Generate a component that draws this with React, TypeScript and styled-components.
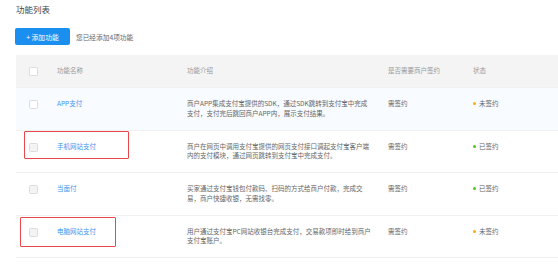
import styled, { createGlobalStyle } from "styled-components";

const GlobalStyle = createGlobalStyle`
  html, body {
    margin: 0;
    padding: 0;
    background: #ffffff;
  }
  body {
    font-family: "Noto Sans CJK SC", "Noto Sans", "Liberation Sans", sans-serif;
    -webkit-font-smoothing: antialiased;
  }
`;

const Page = styled.div`
  position: relative;
  width: 558px;
  height: 264px;
  overflow: hidden;
  padding-left: 16px;
  box-sizing: border-box;
`;

const Title = styled.div`
  font-size: 8.5px;
  line-height: 12px;
  color: #444;
  padding-top: 3px;
`;

const Toolbar = styled.div`
  display: flex;
  align-items: center;
  gap: 6px;
  margin-top: 13px;
  margin-left: -1px;
`;

const AddButton = styled.button`
  width: 55px;
  height: 17px;
  border: none;
  border-radius: 2px;
  background: #1a8ff0;
  color: #fff;
  font-family: inherit;
  font-size: 6.8px;
  padding: 0;
  cursor: pointer;
`;

const Hint = styled.span`
  font-size: 6.7px;
  color: #666;
`;

const Table = styled.div`
  margin-top: 10px;
  width: 560px;
`;

const Row = styled.div<{ $head?: boolean; $hover?: boolean }>`
  display: grid;
  grid-template-columns: 28px 130px 201px 85px 1fr;
  align-items: ${(p) => (p.$head ? "center" : "start")};
  height: ${(p) => (p.$head ? 33 : 42.5)}px;
  padding: ${(p) => (p.$head ? "0 0 0 13px" : "11px 0 0 13px")};
  box-sizing: border-box;
  background: ${(p) => (p.$head ? "#f4f4f4" : p.$hover ? "#f8fbff" : "#fff")};
  border-bottom: 1px solid #f0f0f0;
  font-size: 6.5px;
  line-height: 9.5px;
  color: ${(p) => (p.$head ? "#999" : "#666")};
`;

const Check = styled.span<{ $muted?: boolean }>`
  display: block;
  width: 7px;
  height: 7px;
  margin-top: ${(p) => (p.$muted === undefined ? 0 : 1)}px;
  border: 1px solid #dcdcdc;
  border-radius: 1.5px;
  background: ${(p) => (p.$muted ? "#f4f4f4" : "#fff")};
`;

const Name = styled.a`
  color: #3d94ef;
  text-decoration: none;
`;

const Desc = styled.div`
  white-space: nowrap;
`;

const Status = styled.span<{ $ok: boolean }>`
  display: flex;
  align-items: center;
  gap: 3px;
  &::before {
    content: "";
    width: 3px;
    height: 3px;
    border-radius: 50%;
    background: ${(p) => (p.$ok ? "#52c41a" : "#faad14")};
  }
`;

const Mark = styled.div<{ $x: number; $y: number; $w: number; $h: number }>`
  position: absolute;
  left: ${(p) => p.$x}px;
  top: ${(p) => p.$y}px;
  width: ${(p) => p.$w}px;
  height: ${(p) => p.$h}px;
  border: 1.5px solid #e8474c;
  box-sizing: border-box;
  border-radius: 1px;
  pointer-events: none;
`;

const features = [
  {
    name: "APP支付",
    desc: ["商户APP集成支付宝提供的SDK，通过SDK跳转到支付宝中完成", "支付，支付完后跳回商户APP内，展示支付结果。"],
    signed: false,
    hover: true,
  },
  {
    name: "手机网站支付",
    desc: ["商户在网页中调用支付宝提供的网页支付接口调起支付宝客户端", "内的支付模块，通过网页跳转到支付宝中完成支付。"],
    signed: true,
  },
  {
    name: "当面付",
    desc: ["买家通过支付宝钱包付款码、扫码的方式给商户付款，完成交", "易，商户快捷收银，无需找零。"],
    signed: true,
  },
  {
    name: "电脑网站支付",
    desc: ["用户通过支付宝PC网站收银台完成支付，交易款项即时给到商户", "支付宝账户。"],
    signed: false,
  },
];

export default function App() {
  return (
    <Page>
      <GlobalStyle />
      <Title>功能列表</Title>
      <Toolbar>
        <AddButton>+ 添加功能</AddButton>
        <Hint>您已经添加4项功能</Hint>
      </Toolbar>
      <Table>
        <Row $head>
          <Check />
          <span>功能名称</span>
          <span>功能介绍</span>
          <span>是否需要商户签约</span>
          <span>状态</span>
        </Row>
        {features.map((f, i) => (
          <Row key={f.name} $hover={f.hover}>
            <Check $muted={i > 0} />
            <Name href="#">{f.name}</Name>
            <Desc>
              {f.desc.map((line) => (
                <div key={line}>{line}</div>
              ))}
            </Desc>
            <span>需签约</span>
            <Status $ok={f.signed}>{f.signed ? "已签约" : "未签约"}</Status>
          </Row>
        ))}
      </Table>
      <Mark $x={24} $y={131} $w={105} $h={28} />
      <Mark $x={20} $y={217} $w={96} $h={30} />
    </Page>
  );
}
